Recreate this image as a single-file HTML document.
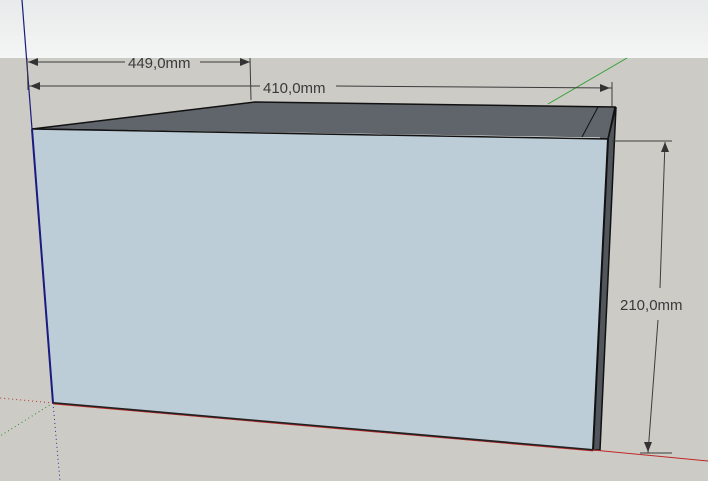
<!DOCTYPE html>
<html><head><style>
html,body{margin:0;padding:0;width:708px;height:481px;overflow:hidden}
svg{display:block}
text{font-family:"Liberation Sans",sans-serif;font-size:15px;fill:#3a3a3a}
</style></head><body>
<svg width="708" height="481" viewBox="0 0 708 481">
<defs>
<linearGradient id="sky" x1="0" y1="0" x2="0" y2="1">
<stop offset="0" stop-color="#e8ebeb"/><stop offset="1" stop-color="#f4f5f5"/>
</linearGradient>
</defs>
<rect width="708" height="58" fill="url(#sky)"/>
<rect y="58" width="708" height="423" fill="#cccbc6"/>
<line x1="53" y1="403" x2="0" y2="398" stroke="#c03030" stroke-width="1" stroke-dasharray="1,3"/>
<line x1="53" y1="403" x2="0" y2="436" stroke="#309030" stroke-width="1" stroke-dasharray="1,3"/>
<line x1="53" y1="403" x2="60" y2="481" stroke="#2030a0" stroke-width="1" stroke-dasharray="1,3"/>
<line x1="22" y1="0" x2="32" y2="129" stroke="#1a1a80" stroke-width="1.2"/>
<line x1="548" y1="104" x2="627" y2="58" stroke="#30a030" stroke-width="1"/>
<polygon points="32,129 255,102 615,107 608,139" fill="#5f656b" stroke="#111" stroke-width="1.5"/>
<line x1="598" y1="107" x2="582" y2="137" stroke="#111" stroke-width="1"/>
<line x1="100" y1="130" x2="600" y2="138" stroke="#fff" stroke-width="1"/>
<polygon points="608,139 616,107 600,450 593,450" fill="#50565c" stroke="#111" stroke-width="1.5"/>
<polygon points="32,129 608,139 593,450 53,403" fill="#bdcdd7"/>
<line x1="32" y1="129" x2="608" y2="139" stroke="#111" stroke-width="1.5"/>
<line x1="32" y1="129" x2="53" y2="403" stroke="#1a1a80" stroke-width="2"/>
<line x1="608" y1="139" x2="593" y2="450" stroke="#111" stroke-width="2"/>
<line x1="53" y1="403" x2="593" y2="450" stroke="#222" stroke-width="2"/>
<line x1="53" y1="404" x2="593" y2="451" stroke="#c02828" stroke-width="0.7"/>
<line x1="593" y1="450" x2="708" y2="461" stroke="#c02828" stroke-width="1"/>
<g stroke="#3c3c3c" stroke-width="1" fill="none">
<line x1="27" y1="58" x2="28" y2="90"/>
<line x1="250" y1="58" x2="251" y2="100"/>
<line x1="28" y1="62" x2="125" y2="62"/><line x1="200" y1="62" x2="250" y2="62"/>
<line x1="28" y1="86" x2="260" y2="86"/><line x1="336" y1="86" x2="612" y2="88"/>
<line x1="612" y1="82" x2="612" y2="106"/>
<line x1="612" y1="141" x2="672" y2="141"/>
<line x1="640" y1="453" x2="672" y2="453"/>
<line x1="665" y1="142" x2="660" y2="288"/><line x1="658" y1="320" x2="648" y2="453"/>
</g>
<g fill="#333">
<polygon points="28,62 38,58 38,66"/>
<polygon points="250,62 240,58 240,66"/>
<polygon points="30,86 40,82 40,90"/>
<polygon points="610,88 600,84 600,92"/>
<polygon points="665,142 661,152 669,152"/>
<polygon points="648,452 644,442 652,442"/>
</g>
<text x="128" y="68">449,0mm</text>
<text x="263" y="93">410,0mm</text>
<text x="620" y="310">210,0mm</text>
</svg>
</body></html>
